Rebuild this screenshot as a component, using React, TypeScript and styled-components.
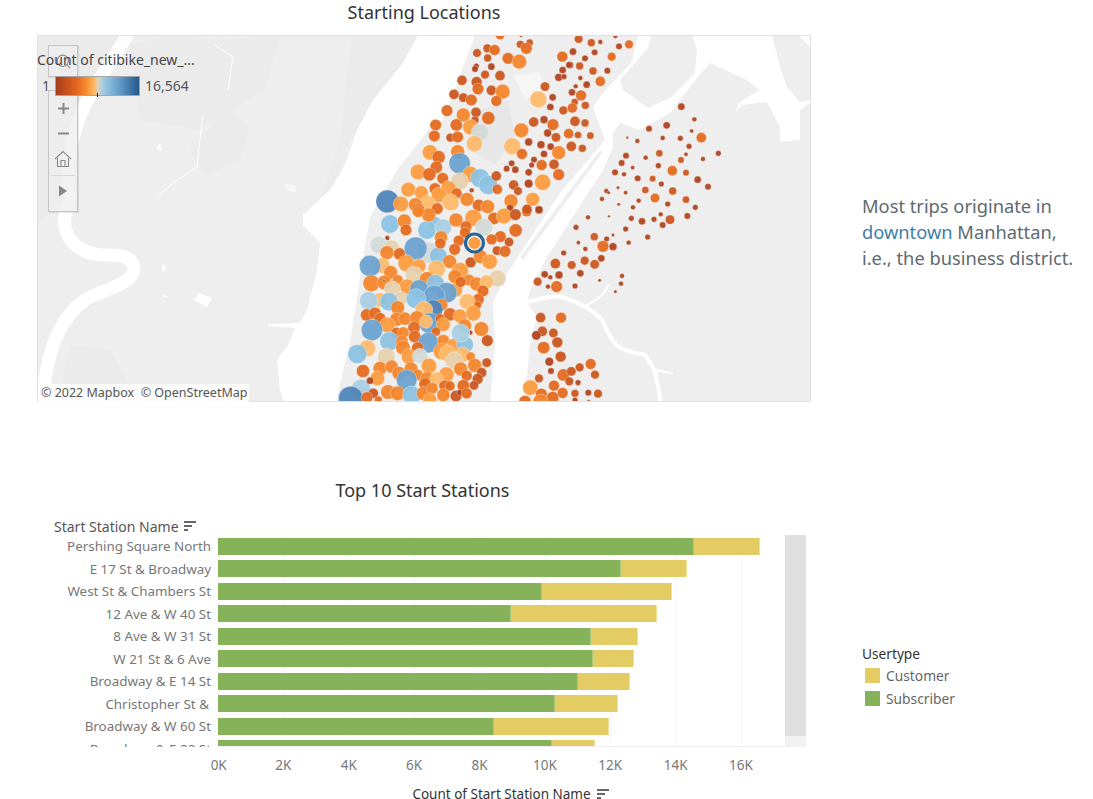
import React from "react";
import styled, { createGlobalStyle } from "styled-components";
import { Search } from "lucide-react";

const GlobalStyle = createGlobalStyle`
  html, body { margin: 0; padding: 0; background: #fff; }
  body { font-family: "Noto Sans", "Open Sans", "Liberation Sans", sans-serif; }
`;

const Page = styled.div`
  width: 1093px;
  height: 799px;
  overflow: hidden;
  display: flex;
  flex-direction: column;
`;

const TopRow = styled.section`
  display: flex;
  height: 402px;
`;

const MapColumn = styled.div`
  width: 774px;
  margin-left: 37px;
  display: flex;
  flex-direction: column;
`;

const Title = styled.h2`
  margin: 0;
  font-size: 18px;
  font-weight: 400;
  color: #333;
  text-align: center;
  line-height: 24px;
  white-space: nowrap;
`;

const MapTitle = styled(Title)`
  height: 35px;
`;

const MapFrame = styled.div`
  position: relative;
  height: 367px;
  overflow: hidden;
  background: #eee;
`;

const MapSvg = styled.svg`
  display: block;
`;

const Legend = styled.div`
  position: absolute;
  left: 0;
  top: 15px;
  width: 175px;
  color: #444;
  font-size: 14px;
  line-height: 20px;
  white-space: nowrap;
`;

const LegendRow = styled.div`
  display: flex;
  align-items: center;
  margin-top: 6px;
  padding-left: 5px;
  color: #555;
`;

const ColorRamp = styled.div`
  position: relative;
  box-sizing: border-box;
  width: 85px;
  height: 20px;
  margin: 0 5px 0 5px;
  border: 1px solid #a5a5a5;
  background: linear-gradient(
    to right,
    #a63c1c 0%,
    #e4661f 25%,
    #f58a30 36%,
    #fdb763 46%,
    #d9d3c4 51%,
    #9bc9e3 58%,
    #5f97c5 78%,
    #23598c 100%
  );
  &::after {
    content: "";
    position: absolute;
    left: 41px;
    bottom: -2px;
    width: 1px;
    height: 4px;
    background: #111;
  }
`;

const ToolGroup = styled.div`
  position: absolute;
  left: 11px;
  width: 30px;
  box-sizing: border-box;
  background: rgba(238, 238, 238, 0.75);
  border: 1px solid #c4c4c4;
  box-shadow: 1px 1px 1px rgba(0, 0, 0, 0.08);
  display: flex;
  flex-direction: column;
  align-items: center;
  color: #8a8a8a;
`;

const SearchTool = styled(ToolGroup)`
  top: 10px;
  height: 32px;
  padding-top: 7px;
`;

const ZoomTools = styled(ToolGroup)`
  top: 55px;
  height: 122px;
`;

const ToolButton = styled.div`
  height: 25px;
  display: flex;
  align-items: center;
  justify-content: center;
`;

const FirstToolButton = styled(ToolButton)`
  margin-top: 5px;
`;

const ToolDivider = styled.div`
  width: 24px;
  height: 1px;
  margin: 4px 0 2px;
  background: #d6d6d6;
`;

const Attribution = styled.div`
  position: absolute;
  left: 1px;
  bottom: 0;
  padding: 0 2px 0 3px;
  height: 18px;
  line-height: 18px;
  font-size: 12.5px;
  color: #555;
  background: rgba(255, 255, 255, 0.85);
  white-space: pre;
`;

const Note = styled.p`
  margin: 193px 0 0 51px;
  width: 225px;
  font-size: 18.3px;
  line-height: 26px;
  color: #5e6a70;
  white-space: nowrap;
`;

const Accent = styled.span`
  color: #3f7ea6;
`;

const BottomRow = styled.section`
  display: flex;
  margin-top: 76px;
`;

const ChartColumn = styled.div`
  width: 806px;
  margin-left: 0;
`;

const ChartTitle = styled(Title)`
  width: 845px;
`;

const ColumnHeader = styled.div`
  display: flex;
  align-items: center;
  gap: 5px;
  margin: 14px 0 0 54px;
  height: 20px;
  font-size: 14px;
  color: #555;
`;

const ChartBody = styled.div`
  display: flex;
  height: 212px;
  margin-top: -1px;
`;

const LabelColumn = styled.div`
  width: 211px;
  height: 212px;
  overflow: hidden;
  flex: none;
`;

const RowLabel = styled.div<{ $inset?: boolean }>`
  height: 22.5px;
  line-height: 22.5px;
  text-align: right;
  font-size: 13.4px;
  color: #777;
  padding-right: ${(p) => (p.$inset ? 2 : 0)}px;
  white-space: nowrap;
`;

const Plot = styled.div`
  width: 567px;
  height: 212px;
  margin-left: 7px;
  overflow: hidden;
  flex: none;
  box-sizing: border-box;
  border-bottom: 1px solid #f0f0f0;
  background-image: linear-gradient(to right, #f5f5f5 1px, transparent 1px);
  background-size: 65.38px 100%;
`;

const BarRow = styled.div`
  height: 22.5px;
  display: flex;
  align-items: center;
`;

const Segment = styled.div<{ $kind: "subscriber" | "customer" }>`
  height: 17px;
  box-sizing: border-box;
  background: ${(p) => (p.$kind === "subscriber" ? "#86b35a" : "#e3cc64")};
  border-right: 1px solid ${(p) => (p.$kind === "subscriber" ? "#a9c77f" : "#efe09c")};
`;

const ScrollTrack = styled.div`
  width: 21px;
  height: 212px;
  flex: none;
  background: #f2f2f2;
`;

const ScrollThumb = styled.div`
  height: 201px;
  background: #e0e0e0;
`;

const AxisRow = styled.div`
  height: 26px;
  margin-left: 218px;
  width: 567px;
  display: flex;
`;

const AxisTick = styled.div`
  width: 65.38px;
  flex: none;
  font-size: 13.5px;
  line-height: 18px;
  padding-top: 9px;
  color: #777;
  text-align: center;
  transform: translateX(-32.7px);
  &:first-child {
    transform: translateX(-32px);
  }
`;

const AxisTitle = styled.div`
  display: flex;
  align-items: center;
  justify-content: center;
  gap: 6px;
  width: 1022px;
  margin-top: 11px;
  height: 20px;
  font-size: 13.5px;
  color: #333;
  white-space: nowrap;
`;

const KeyPanel = styled.aside`
  margin: 166px 0 0 56px;
`;

const KeyTitle = styled.div`
  font-size: 13.7px;
  line-height: 20px;
  color: #333;
`;

const KeyItem = styled.div`
  display: flex;
  align-items: center;
  gap: 6px;
  height: 23px;
  margin-left: 3px;
  font-size: 13.8px;
  color: #666;
`;

const Swatch = styled.span<{ $color: string }>`
  width: 15px;
  height: 15px;
  background: ${(p) => p.$color};
`;

const SortIcon = () => (
  <svg width="13" height="12" viewBox="0 0 13 12">
    <rect x="0" y="1" width="12" height="2" fill="#666" />
    <rect x="0" y="5" width="8" height="2" fill="#666" />
    <rect x="0" y="9" width="4" height="2" fill="#666" />
  </svg>
);

const colors: Record<string, string> = {
  a: "#b0441f",
  b: "#c9561f",
  c: "#e36a20",
  d: "#f3862c",
  e: "#fb9c3f",
  f: "#fdb96a",
  g: "#e6d0ae",
  h: "#d3d9d6",
  i: "#a9cfe0",
  j: "#8cc1e1",
  k: "#6ba1cd",
  l: "#4f85b7",
  m: "#2a6494",
};

type Dot = [number, number, number, string];

// measured on 3x crops, so each list keeps its crop origin
const uptown: Dot[] = [
  [510,15,12,"c"],[573,17,4,"a"],[571,43,10,"b"],[599,38,9,"b"],[589,55,15,"c"],[472,55,11,"b"],[494,60,14,"c"],[441,69,11,"b"],[473,84,10,"b"],[534,85,15,"c"],[568,95,19,"d"],[697,80,14,"c"],[439,108,7,"a"],[435,117,8,"a"],[484,110,9,"a"],[465,134,11,"b"],[510,137,13,"b"],[698,120,9,"a"],[717,105,8,"a"],[686,142,10,"a"],[702,140,7,"a"],[396,151,13,"b"],[440,156,14,"b"],[444,177,15,"c"],[484,181,13,"b"],[518,185,19,"d"],[645,170,12,"b"],[372,193,13,"b"],[400,203,12,"b"],[424,210,15,"c"],[499,213,14,"c"],[625,208,22,"f"],[668,202,9,"a"],[661,231,9,"a"],[351,242,15,"c"],[438,247,13,"b"],[400,255,18,"d"],[435,270,10,"b"],[475,264,17,"c"],[700,241,11,"b"],[611,276,13,"b"],[642,269,10,"a"],[317,285,15,"c"],[379,285,16,"c"],[421,291,20,"e"],[450,307,23,"h"],[669,284,15,"c"],[574,301,19,"d"],[313,318,15,"c"],[361,323,11,"b"],[383,321,15,"c"],[653,309,10,"a"],[678,322,12,"b"],[433,341,21,"f"],[596,336,10,"a"],[547,349,22,"f"],[633,344,10,"a"],[662,350,9,"a"],[300,367,20,"e"],[383,365,18,"d"],[326,381,17,"c"],[576,372,14,"c"],[642,372,9,"a"],[686,368,18,"d"],[389,400,28,"k"],[612,389,8,"a"],[545,400,8,"a"],[605,405,7,"a"],[635,405,14,"c"],[672,403,13,"b"],[530,416,8,"a"],[556,419,9,"a"],[319,412,16,"c"],[264,426,20,"e"],[298,433,17,"c"],[421,433,21,"e"],[596,427,9,"a"],[686,434,15,"c"],[338,445,15,"c"],[450,445,25,"j"],[475,465,25,"j"],[389,454,23,"g"],[499,438,13,"b"],[551,465,13,"b"],[596,461,11,"a"],[638,457,21,"e"],[315,476,15,"c"],[425,481,6,"a"],[502,478,13,"c"],[235,479,19,"e"],[274,488,18,"e"],[564,483,11,"b"],[355,475,20,"e"],[380,490,14,"c"],[327,495,20,"e"],[172,514,30,"l"],[213,522,20,"e"],[411,508,18,"d"],[543,513,18,"d"],[608,508,18,"e"],[292,522,22,"f"],[362,517,22,"f"],[256,524,18,"d"],[265,541,17,"c"],[322,536,15,"c"],[446,526,16,"c"],[473,530,18,"d"],[540,534,9,"a"],[591,538,13,"b"],[627,539,10,"a"],
];

const midtown: Dot[] = [
  [180,42,24,"j"],[223,33,18,"d"],[228,60,15,"c"],[172,84,6,"a"],[147,105,23,"h"],[185,113,20,"g"],[171,128,18,"d"],[209,132,16,"c"],[316,38,15,"j"],[291,60,24,"j"],[340,52,22,"i"],[296,15,18,"d"],[265,5,15,"d"],[378,30,18,"d"],[430,24,22,"e"],[492,25,16,"c"],[522,18,20,"e"],[556,14,15,"b"],[462,52,23,"h"],[408,50,15,"c"],[405,68,14,"c"],[295,128,28,"h"],[325,138,23,"j"],[257,115,30,"k"],[333,82,17,"d"],[331,100,14,"c"],[386,92,14,"c"],[511,80,15,"c"],[485,88,14,"c"],[537,96,12,"b"],[557,61,17,"c"],[501,122,12,"b"],[525,124,15,"c"],[374,118,15,"c"],[359,155,18,"d"],[422,157,14,"b"],[451,140,18,"d"],[479,155,20,"e"],[157,167,20,"f"],[120,168,28,"k"],[229,160,22,"e"],[267,168,18,"e"],[320,177,23,"f"],[390,183,22,"e"],[182,187,18,"d"],[252,195,23,"g"],[375,200,18,"d"],[503,205,22,"g"],[124,220,22,"d"],[163,218,19,"d"],[162,213,3,"a"],[203,210,14,"d"],[291,208,20,"d"],[377,240,18,"e"],[417,210,15,"d"],[392,216,14,"c"],[440,222,18,"d"],[470,216,18,"f"],[231,230,20,"e"],[187,238,22,"g"],[316,220,23,"j"],[267,237,24,"k"],[459,243,15,"c"],[350,248,27,"k"],[313,258,28,"k"],[212,265,18,"g"],[258,266,26,"j"],[150,270,19,"f"],[116,272,24,"i"],[177,275,24,"j"],[445,268,15,"c"],[412,275,21,"f"],[203,293,18,"d"],[335,285,16,"d"],[443,285,10,"c"],[310,298,25,"l"],[282,300,23,"f"],[110,315,16,"c"],[135,310,16,"c"],[150,325,15,"c"],[430,310,20,"e"],[360,313,17,"c"],[390,318,18,"e"],[200,328,18,"d"],[225,326,17,"d"],[300,340,28,"k"],[261,324,19,"d"],[288,335,17,"f"],[330,325,12,"c"],[172,345,20,"e"],[126,360,28,"k"],[340,344,18,"e"],[252,353,16,"c"],[200,368,14,"c"],[220,368,15,"d"],[254,380,16,"c"],[404,347,18,"d"],[454,357,19,"d"],[421,368,6,"a"],[318,365,12,"c"],[472,392,15,"b"],[178,394,25,"j"],[216,395,16,"d"],[295,398,27,"k"],[340,392,16,"d"],[370,405,17,"e"],[405,404,22,"j"],[392,369,24,"i"],[219,413,19,"d"],[263,414,16,"c"],[112,415,22,"f"],[82,432,25,"j"],[335,424,22,"e"],[398,434,20,"f"],[353,430,22,"f"],[237,440,20,"e"],[169,440,23,"g"],[270,438,20,"h"],[422,440,12,"d"],[372,452,23,"g"],[297,468,20,"e"],[434,466,18,"d"],[470,458,12,"b"],[99,483,17,"c"],[150,475,18,"d"],[185,470,17,"d"],[243,477,18,"d"],[207,490,18,"d"],[392,477,18,"d"],[455,488,13,"b"],[410,497,14,"c"],[443,507,14,"b"],[142,505,19,"e"],[263,495,15,"d"],[230,510,27,"k"],[291,505,17,"d"],[349,494,20,"e"],[320,507,18,"f"],[93,536,25,"i"],[120,512,9,"a"],[285,522,16,"c"],[344,528,15,"c"],[360,528,13,"c"],[400,527,16,"c"],[432,526,12,"b"],[378,558,15,"b"],[390,548,8,"a"],[174,546,19,"d"],[203,550,19,"d"],[245,555,24,"j"],[280,550,18,"d"],[307,535,15,"d"],[62,565,32,"l"],[130,550,13,"b"],[111,563,15,"c"],[340,555,17,"d"],[410,550,14,"c"],[145,570,10,"c"],[300,570,18,"e"],
];

const queens: Dot[] = [
  [56,27,11,"b"],[94,38,10,"b"],[121,36,6,"a"],[166,18,6,"a"],[177,49,8,"a"],[207,43,11,"c"],[39,65,9,"a"],[104,67,8,"a"],[155,80,11,"c"],[75,85,8,"a"],[30,105,9,"a"],[59,108,10,"b"],[99,123,10,"b"],[142,122,8,"a"],[61,144,6,"a"],[121,154,13,"c"],[80,164,9,"a"],[47,169,6,"a"],[36,187,9,"a"],[63,196,14,"c"],[44,216,9,"b"],[37,234,13,"c"],[76,226,10,"b"],[364,230,9,"a"],[403,268,6,"a"],[267,296,8,"a"],[320,286,9,"a"],[395,303,5,"a"],[45,274,13,"b"],[75,279,10,"b"],[26,311,13,"c"],[54,315,9,"b"],[91,317,9,"b"],[202,323,3,"a"],[232,333,6,"a"],[308,324,6,"a"],[361,325,7,"a"],[424,323,13,"c"],[387,349,7,"a"],[34,349,13,"b"],[67,355,10,"b"],[298,370,9,"b"],[198,377,8,"a"],[257,383,6,"a"],[378,373,5,"a"],[429,387,6,"a"],[475,370,7,"a"],[363,390,8,"b"],[185,399,8,"a"],[295,407,7,"a"],[218,413,5,"a"],[337,422,13,"c"],[378,428,8,"b"],[165,427,8,"a"],[192,433,6,"a"],[233,445,8,"a"],[278,446,8,"b"],[413,449,9,"a"],[304,462,7,"a"],[444,470,8,"a"],[174,473,4,"a"],[139,483,6,"a"],[146,488,4,"a"],[197,488,5,"a"],[256,480,9,"b"],[338,483,10,"b"],[285,504,12,"c"],[126,507,6,"a"],[378,509,9,"b"],[236,512,6,"a"],[323,522,7,"a"],[176,523,4,"a"],[219,532,6,"a"],[406,532,7,"a"],
];

const brooklyn: Dot[] = [
  [20,5,13,"c"],[57,0,10,"b"],[204,22,6,"a"],[267,19,3,"a"],[334,25,7,"a"],[366,34,9,"a"],[402,28,7,"a"],[422,13,6,"a"],[450,29,12,"b"],[428,45,8,"a"],[502,18,8,"a"],[168,52,7,"a"],[317,57,7,"a"],[223,80,10,"b"],[260,87,7,"a"],[279,75,4,"a"],[383,81,7,"a"],[175,98,5,"a"],[326,98,6,"a"],[249,109,15,"c"],[279,110,10,"a"],[196,117,6,"a"],[131,129,7,"a"],[244,145,9,"a"],[106,161,13,"b"],[155,165,11,"b"],[194,152,11,"b"],[224,163,12,"b"],[181,190,9,"a"],[74,193,9,"a"],[91,202,6,"a"],[117,195,10,"a"],[306,198,6,"a"],[239,211,4,"a"],[53,215,11,"b"],[84,230,6,"a"],[110,230,15,"c"],[165,228,7,"a"],[303,221,6,"a"],[286,245,4,"a"],[62,323,13,"b"],[123,323,14,"c"],[67,364,13,"b"],[49,376,12,"a"],[100,369,12,"b"],[112,397,14,"b"],[71,413,16,"c"],[122,440,14,"b"],[88,455,11,"a"],[212,462,14,"c"],[179,472,11,"b"],[93,483,8,"a"],[130,495,16,"c"],[154,484,12,"b"],[225,494,11,"b"],[57,505,11,"b"],[148,514,11,"b"],[174,518,7,"a"],[102,527,14,"c"],[31,533,20,"e"],[64,552,15,"c"],[128,549,14,"c"],[165,550,10,"b"],[205,548,8,"a"],[234,551,11,"b"],[98,563,16,"c"],[62,575,20,"d"],[15,575,16,"c"],[165,570,7,"a"],[206,575,5,"b"],
];

const dotGroups: { x: number; y: number; dots: Dot[] }[] = [
  { x: 560, y: 30, dots: queens },
  { x: 520, y: 210, dots: brooklyn },
  { x: 330, y: 30, dots: uptown },
  { x: 330, y: 210, dots: midtown },
];

const MapDrawing = () => (
  <MapSvg width="774" height="367" viewBox="37 35 774 367">
    <rect x="37" y="35" width="774" height="367" fill="#eeeeee" />
    {/* slightly darker parks and blocks */}
    <g fill="#ebebeb">
      <path d="M37 35H125L100 75L85 110L70 165L60 200L37 225Z" />
      <path d="M130 45L170 35L220 40L280 35L265 90L200 130L140 120Z" />
      <path d="M352 35H420L402 64L370 110L345 150L335 190L322 196L340 140Z" />
      <path d="M70 345L110 350L130 385L105 402H58Z" />
      <path d="M480 110L508 100L515 135L495 165L470 150Z" fill="#e7e7e7" />
      <path d="M225 110L250 125L240 160L205 175L190 150Z" />
    </g>
    <path d="M513 75L540 72L545 95L525 98Z" fill="#f6f6f6" />
    {/* water */}
    <g fill="#fff">
      <path d="M418 35H475L443 120L430 127L417 145L397 170L380 200L370 217L360 277L350 343L340 383L337 402H284L280 390L277 360L288 345L295 328L268 326V324L300 323L307 310L317 270L320 243L303 225L303 215L330 190L345 165L357 130L373 100L403 63Z" />
      <path d="M638 35L632 62L603 93L593 107L605 140L560 193L527 243L505 277L493 303L495 343L490 402H520L527 377L530 343L537 317L527 303L530 290L547 257L577 210L603 170L613 147L613 133L620 123L640 130L670 113L693 83L710 63L747 80L760 90L740 102L735 112L742 105L767 102L780 127L780 142L800 140L800 110L811 102V35Z" />
    </g>
    <g fill="#eeeeee">
      <path d="M651 35H692L697 50L695 73L670 98L648 108L623 90L620 80L648 48Z" />
      <path d="M772 35L780 67L787 87L800 102L811 100V48L798 35Z" />
      <path d="M520 257L600 150L603 152L523 260Z" />
    </g>
    <g fill="none" stroke="#fff" strokeLinejoin="round" strokeLinecap="round">
      <path d="M127 35C112 62 90 90 82 112C72 135 64 170 70 198" strokeWidth="13" />
      <path d="M68 205C60 225 66 245 90 253C110 258 130 250 134 268C134 285 105 288 85 300C60 318 50 345 43 390" strokeWidth="13" />
      <path d="M528 302C545 297 555 295 565 298C585 305 595 312 602 320C610 335 612 345 625 350C640 355 640 353 645 355" strokeWidth="4" />
      <path d="M645 355C652 365 653 368 655 372C658 385 660 395 660 402" strokeWidth="4" />
      <path d="M655 370L672 373M584 307C595 300 605 296 608 285" strokeWidth="2" />
      <path d="M203 117L201 130L197 167L173 183L157 197M215 45L233 57L228 90" strokeWidth="1" />
    </g>
    <g fill="#fff">
      <path d="M199 293L212 298L207 307L194 300Z" />
      <path d="M156 149L160 143L162 151Z" />
      <path d="M163 263L166 270L162 272ZM162 297L165 295L168 297Z" />
    </g>
    <path d="M287 183L297 187L295 193L285 189Z" fill="#f6f6f6" />
    {dotGroups.map((group) =>
      group.dots.map(([x, y, r, c], i) => (
        <circle
          key={`${group.x}-${group.y}-${i}`}
          cx={group.x + x / 3}
          cy={group.y + y / 3}
          r={(r / 3) * 1.12 + 0.2}
          fill={colors[c]}
          fillOpacity={0.95}
          stroke="#fff"
          strokeOpacity={0.4}
          strokeWidth={0.8}
        />
      ))
    )}
    <circle cx="474.5" cy="243" r="9" fill="none" stroke={colors.m} strokeWidth="3.2" />
    <circle cx="474.5" cy="243" r="6" fill={colors.e} />
    <rect x="37.5" y="35.5" width="773" height="366" fill="none" stroke="#e2e2e2" />
  </MapSvg>
);

const HomeIcon = () => (
  <svg width="18" height="18" viewBox="0 0 18 18" fill="none" stroke="#8a8a8a" strokeWidth="1.1">
    <path d="M1 9L9 1.5L17 9" />
    <path d="M3.5 8V16.5H14.5V8" />
    <path d="M7 16.5V10.5H11V16.5" />
  </svg>
);

const PlusIcon = () => (
  <svg width="13" height="13" viewBox="0 0 13 13">
    <path d="M5.5 1H7.5V5.5H12V7.5H7.5V12H5.5V7.5H1V5.5H5.5Z" fill="#888" />
  </svg>
);

const MinusIcon = () => (
  <svg width="13" height="13" viewBox="0 0 13 13">
    <rect x="1" y="5.5" width="11" height="2" fill="#888" />
  </svg>
);

const PlayIcon = () => (
  <svg width="10" height="12" viewBox="0 0 10 12">
    <path d="M1 0.5L9 6L1 11.5Z" fill="#888" />
  </svg>
);

const stations = [
  { name: "Pershing Square North", subscriber: 476, total: 542 },
  { name: "E 17 St & Broadway", subscriber: 403, total: 468.5 },
  { name: "West St & Chambers St", subscriber: 324, total: 453.5 },
  { name: "12 Ave & W 40 St", subscriber: 293, total: 439 },
  { name: "8 Ave & W 31 St", subscriber: 373, total: 420 },
  { name: "W 21 St & 6 Ave", subscriber: 375, total: 415.5 },
  { name: "Broadway & E 14 St", subscriber: 360, total: 412 },
  { name: "Christopher St & ", subscriber: 337, total: 399.5, inset: true },
  { name: "Broadway & W 60 St", subscriber: 276, total: 390.5 },
  { name: "Broadway & E 22 St", subscriber: 334, total: 377 },
];

const ticks = ["0K", "2K", "4K", "6K", "8K", "10K", "12K", "14K", "16K"];

export default function App() {
  return (
    <Page>
      <GlobalStyle />
      <TopRow>
        <MapColumn>
          <MapTitle>Starting Locations</MapTitle>
          <MapFrame>
            <MapDrawing />
            <SearchTool>
              <Search size={17} strokeWidth={1.6} />
            </SearchTool>
            <ZoomTools>
              <FirstToolButton><PlusIcon /></FirstToolButton>
              <ToolButton><MinusIcon /></ToolButton>
              <ToolButton><HomeIcon /></ToolButton>
              <ToolDivider />
              <ToolButton><PlayIcon /></ToolButton>
            </ZoomTools>
            <Legend>
              Count of citibike_new_...
              <LegendRow>
                1<ColorRamp />16,564
              </LegendRow>
            </Legend>
            <Attribution>© 2022 Mapbox  © OpenStreetMap</Attribution>
          </MapFrame>
        </MapColumn>
        <Note>
          Most trips originate in
          <br />
          <Accent>downtown</Accent> Manhattan,
          <br />
          i.e., the business district.
        </Note>
      </TopRow>
      <BottomRow>
        <ChartColumn>
          <ChartTitle>Top 10 Start Stations</ChartTitle>
          <ColumnHeader>
            Start Station Name <SortIcon />
          </ColumnHeader>
          <ChartBody>
            <LabelColumn>
              {stations.map((s) => (
                <RowLabel key={s.name} $inset={s.inset}>{s.name}</RowLabel>
              ))}
            </LabelColumn>
            <Plot>
              {stations.map((s) => (
                <BarRow key={s.name}>
                  <Segment $kind="subscriber" style={{ width: s.subscriber }} />
                  <Segment $kind="customer" style={{ width: s.total - s.subscriber }} />
                </BarRow>
              ))}
            </Plot>
            <ScrollTrack>
              <ScrollThumb />
            </ScrollTrack>
          </ChartBody>
          <AxisRow>
            {ticks.map((t) => (
              <AxisTick key={t}>{t}</AxisTick>
            ))}
          </AxisRow>
          <AxisTitle>
            Count of Start Station Name <SortIcon />
          </AxisTitle>
        </ChartColumn>
        <KeyPanel>
          <KeyTitle>Usertype</KeyTitle>
          <KeyItem><Swatch $color="#e3cc64" />Customer</KeyItem>
          <KeyItem><Swatch $color="#86b35a" />Subscriber</KeyItem>
        </KeyPanel>
      </BottomRow>
    </Page>
  );
}
